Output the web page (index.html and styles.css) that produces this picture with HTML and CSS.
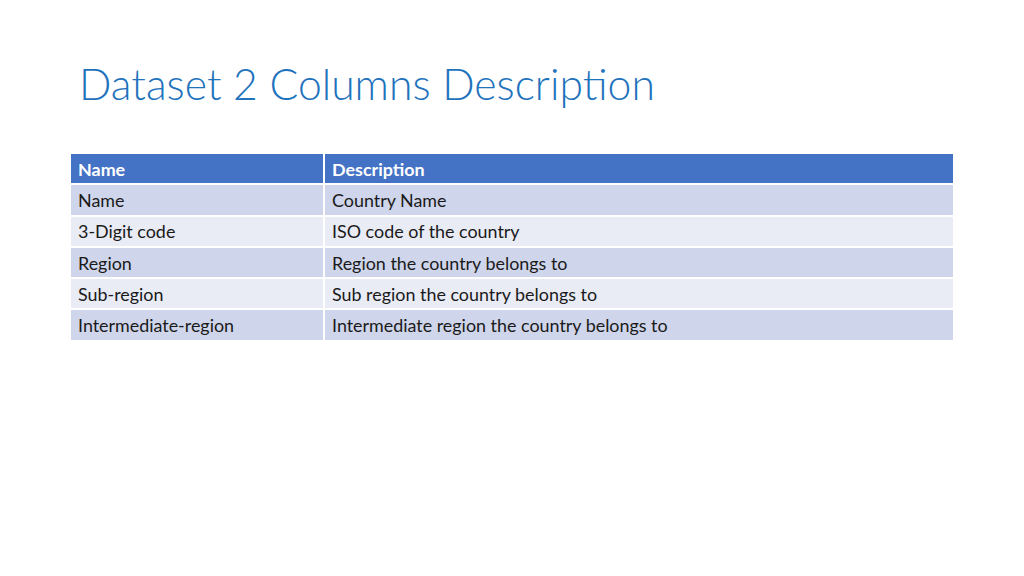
FILE: index.html
```html
<!DOCTYPE html>
<html>
<head>
<meta charset="utf-8">
<link rel="stylesheet" href="styles.css">
</head>
<body>
<div class="slide">
  <h1 class="title">Dataset 2 Columns Description</h1>
  <table class="grid">
    <thead>
      <tr><th class="c1">Name</th><th>Description</th></tr>
    </thead>
    <tbody>
      <tr class="odd"><td>Name</td><td>Country Name</td></tr>
      <tr class="even"><td>3-Digit code</td><td>ISO code of the country</td></tr>
      <tr class="odd"><td>Region</td><td>Region the country belongs to</td></tr>
      <tr class="even"><td>Sub-region</td><td>Sub region the country belongs to</td></tr>
      <tr class="odd"><td>Intermediate-region</td><td>Intermediate region the country belongs to</td></tr>
    </tbody>
  </table>
</div>
</body>
</html>
```
FILE: styles.css
```css
html, body {
  margin: 0;
  padding: 0;
  background: #ffffff;
}
.slide {
  width: 1024px;
  height: 576px;
  box-sizing: border-box;
  padding: 58px 71px 0 71px;
  font-family: Lato, "Open Sans", sans-serif;
}
.title {
  margin: 0 0 0 8px;
  font-weight: 300;
  font-size: 42.7px;
  line-height: 52px;
  color: #1f73bd;
}
.grid {
  margin-top: 44px;
  width: 882px;
  border-collapse: collapse;
  font-size: 17.9px;
  color: #1a1a1a;
}
.grid th, .grid td {
  text-align: left;
  padding: 0 7px;
  height: 29.3px;
  border-right: 2px solid #ffffff;
  border-bottom: 2px solid #ffffff;
}
.grid th:last-child, .grid td:last-child {
  border-right: 0;
}
.grid th {
  background: #4472c4;
  color: #ffffff;
  font-weight: 700;
}
.grid .c1 {
  width: 238px;
}
.odd td { background: #cfd5ea; }
.even td { background: #e9ebf5; }
```
